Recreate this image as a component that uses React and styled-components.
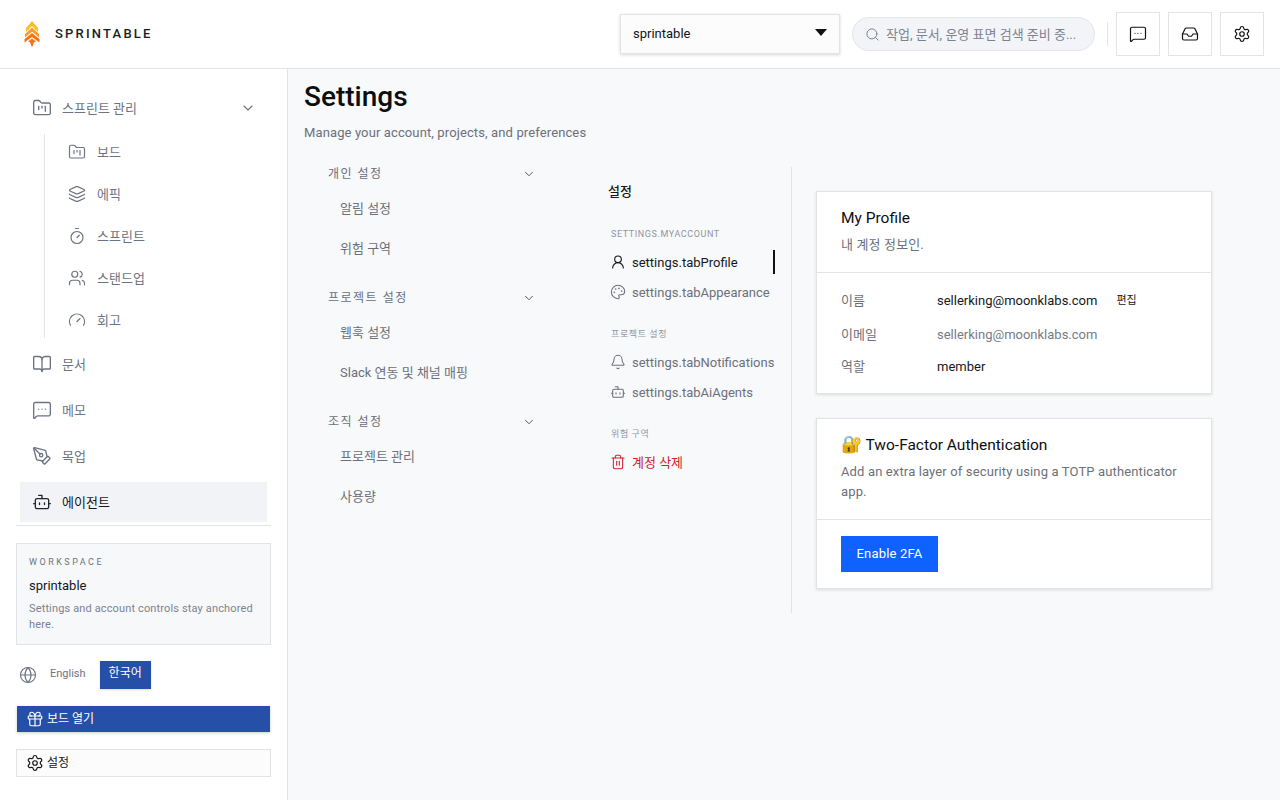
import React from "react";
import styled, { createGlobalStyle } from "styled-components";
import {
  Bell,
  BookOpen,
  Bot,
  ChevronDown,
  FolderKanban,
  Gauge,
  Gift,
  Globe,
  Inbox,
  Layers,
  MessageSquareMore,
  Palette,
  PenTool,
  Search,
  Settings,
  Timer,
  Trash2,
  UserRound,
  Users,
} from "lucide-react";

const GlobalStyle = createGlobalStyle`
  html, body {
    margin: 0;
    height: 100%;
    background: #f8f9fb;
  }

  body {
    font-family: Roboto, "Noto Sans CJK KR", sans-serif;
    color: #111318;
  }

  * {
    box-sizing: border-box;
  }
`;

const Page = styled.div`
  width: 1280px;
  height: 800px;
  display: flex;
  flex-direction: column;
  overflow: hidden;
`;

const Header = styled.header`
  height: 69px;
  flex: none;
  display: flex;
  align-items: center;
  padding: 0 16px 0 24px;
  background: #fff;
  border-bottom: 1px solid #e2e3e6;
`;

const Brand = styled.div`
  display: flex;
  align-items: center;
  gap: 15px;
  margin-right: auto;
`;

const BrandName = styled.span`
  margin-top: -2px;
  font-size: 13px;
  font-weight: 500;
  letter-spacing: 2.2px;
  color: #1b1d22;
`;

const SelectBox = styled.div`
  width: 220px;
  height: 40px;
  display: flex;
  align-items: center;
  justify-content: space-between;
  padding: 0 12px 2px;
  margin-right: 12px;
  font-size: 13px;
  background: #fcfcfc;
  border: 1px solid #e2e3e6;
  box-shadow: 0 1px 3px rgba(0, 0, 0, 0.16);
`;

const Caret = styled.span`
  width: 0;
  height: 0;
  border-left: 6.5px solid transparent;
  border-right: 6.5px solid transparent;
  border-top: 7px solid #111;
  margin-top: -1px;
`;

const SearchBox = styled.div`
  width: 243px;
  height: 34px;
  display: flex;
  align-items: center;
  gap: 6px;
  padding: 0 12px;
  font-size: 13px;
  color: #7d8290;
  background: #f3f4f8;
  border: 1px solid #e3e5eb;
  border-radius: 17px;

  & svg {
    flex: none;
  }

  & span {
    margin-top: -2px;
    white-space: nowrap;
    overflow: hidden;
    text-overflow: ellipsis;
  }
`;

const HeaderDivider = styled.div`
  width: 1px;
  height: 24px;
  margin: 0 8px 0 12px;
  background: #e2e3e6;
`;

const IconButton = styled.div`
  width: 44px;
  height: 44px;
  display: flex;
  align-items: center;
  justify-content: center;
  background: #fff;
  border: 1px solid #e2e3e6;

  & + & {
    margin-left: 8px;
  }
`;

const Body = styled.div`
  flex: 1;
  display: flex;
  min-height: 0;
`;

const Sidebar = styled.aside`
  width: 288px;
  flex: none;
  display: flex;
  flex-direction: column;
  padding: 19px 16px 0;
  background: #fff;
  border-right: 1px solid #e2e3e6;
`;

const Nav = styled.nav`
  display: flex;
  flex-direction: column;
  gap: 6px;
  padding: 0 4px 3px;
  border-bottom: 1px solid #e2e3e6;
  margin-bottom: 17px;
`;

const NavRow = styled.div`
  height: 40px;
  display: flex;
  align-items: center;
  gap: 10px;
  padding: 0 11px 0 12px;
  font-size: 13px;
  line-height: 1;
  color: ${(p) => (p.$active ? "#15171c" : "#6d7383")};
  background: ${(p) => (p.$active ? "#f2f3f7" : "transparent")};

  & svg {
    flex: none;
    color: ${(p) => (p.$active ? "#22252c" : "#6d7383")};
  }

  & svg:last-child:not(:first-child) {
    margin-left: auto;
  }
`;

const SubNav = styled.div`
  display: flex;
  flex-direction: column;
  gap: 6px;
  margin-left: 24px;
  padding-left: 16px;
  border-left: 1px solid #e2e3e6;
`;

const SubRow = styled.div`
  height: 36px;
  display: flex;
  align-items: center;
  gap: 11px;
  padding-left: 7px;
  font-size: 13px;
  line-height: 1;
  color: #6d7383;
`;

const WorkspaceCard = styled.div`
  height: 102px;
  padding: 11px 12px;
  margin-bottom: 16px;
  background: #f7f8fa;
  border: 1px solid #e2e3e6;
`;

const WorkspaceLabel = styled.div`
  font-size: 9px;
  line-height: 14px;
  letter-spacing: 2.5px;
  color: #6d7383;
`;

const WorkspaceName = styled.div`
  margin-top: 7px;
  font-size: 13px;
  line-height: 20px;
  color: #15171c;
`;

const WorkspaceText = styled.div`
  margin-top: 5px;
  font-size: 11px;
  line-height: 16px;
  letter-spacing: 0.14px;
  color: #7d8290;
`;

const LangRow = styled.div`
  height: 28px;
  display: flex;
  align-items: center;
  padding-left: 3px;
  margin-bottom: 17px;
  color: #6d7383;
`;

const LangOption = styled.div`
  height: 28px;
  display: flex;
  align-items: center;
  margin-left: ${(p) => (p.$active ? "14px" : "13px")};
  padding: 0 ${(p) => (p.$active ? "9px" : "0")} 4px;
  font-size: ${(p) => (p.$active ? "12px" : "11px")};
  line-height: 1;
  color: ${(p) => (p.$active ? "#fff" : "#6d7383")};
  background: ${(p) => (p.$active ? "#264fa8" : "transparent")};
  box-shadow: ${(p) => (p.$active ? "0 1px 2px rgba(0,0,0,0.15)" : "none")};
`;

const WideButton = styled.div`
  height: ${(p) => (p.$primary ? "26px" : "28px")};
  display: flex;
  align-items: center;
  gap: 3px;
  margin: ${(p) => (p.$primary ? "0 1px 17px" : "0")};
  padding-left: 9px;
  font-size: 12px;
  line-height: 1;
  color: ${(p) => (p.$primary ? "#fff" : "#15171c")};
  background: ${(p) => (p.$primary ? "#264fa8" : "#fcfcfc")};
  border: ${(p) => (p.$primary ? "none" : "1px solid #e2e3e6")};
  box-shadow: ${(p) => (p.$primary ? "0 1px 3px rgba(0,0,0,0.2)" : "none")};
`;

const Main = styled.main`
  flex: 1;
  padding: 9px 16px 0;
  background: #f8f9fb;
`;

const Title = styled.h1`
  margin: 0;
  font-size: 28px;
  line-height: 38px;
  font-weight: 500;
  color: #0c0d10;
`;

const Subtitle = styled.p`
  margin: 7px 0 0;
  font-size: 13px;
  line-height: 20px;
  letter-spacing: 0.12px;
  color: #6c707a;
`;

const Columns = styled.div`
  display: flex;
  margin-top: 24px;
`;

const GroupColumn = styled.div`
  width: 288px;
  flex: none;
  padding: 0 56px 0 24px;
`;

const Group = styled.div`
  margin-bottom: 23px;
`;

const GroupHead = styled.div`
  height: 14px;
  display: flex;
  align-items: center;
  justify-content: space-between;
  margin-bottom: 7px;
  font-size: 12px;
  line-height: 1;
  letter-spacing: 1.5px;
  color: #6c707a;

  & svg {
    color: #4a4e58;
  }
`;

const GroupItem = styled.div`
  height: 40px;
  display: flex;
  align-items: center;
  padding-left: 12px;
  font-size: 13px;
  line-height: 1;
  color: #6c707a;
`;

const TabColumn = styled.div`
  width: 200px;
  height: 446px;
  flex: none;
  padding: 16px 16px 0;
  border-right: 1px solid #e2e3e6;
`;

const TabTitle = styled.div`
  font-size: 13px;
  line-height: 18px;
  font-weight: 500;
  color: #15171c;
  margin-bottom: 26px;
`;

const TabLabel = styled.div`
  margin: ${(p) => (p.$first ? "0" : "20px")} 0 6px 3px;
  font-size: 9px;
  line-height: 14px;
  letter-spacing: 0.6px;
  color: #91959f;
`;

const Tab = styled.div`
  position: relative;
  height: 30px;
  display: flex;
  align-items: center;
  gap: 6px;
  margin: 0 -16px 0 2px;
  font-size: 13px;
  line-height: 1;
  white-space: nowrap;
  color: ${(p) => (p.$danger ? "#d4202c" : p.$active ? "#15171c" : "#6c707a")};

  & svg {
    flex: none;
  }
`;

const ActiveMark = styled.span`
  position: absolute;
  right: 16px;
  top: 3px;
  width: 2px;
  height: 24px;
  background: #111;
`;

const CardColumn = styled.div`
  width: 396px;
  margin: 24px 0 0 24px;
  display: flex;
  flex-direction: column;
  gap: 24px;
`;

const Card = styled.section`
  background: #fff;
  border: 1px solid #e2e3e6;
  box-shadow: 0 1px 3px rgba(0, 0, 0, 0.12);
`;

const CardHead = styled.div`
  padding: 14px 24px 17px;
  border-bottom: 1px solid #e2e3e6;
`;

const CardTitle = styled.h2`
  height: 24px;
  margin: 0;
  font-size: 15.5px;
  line-height: 24px;
  font-weight: 400;
  color: #0c0d10;
`;

const Emoji = styled.span`
  font-size: 17px;
  line-height: 1;
`;

const CardText = styled.p`
  margin: 5px 0 0;
  font-size: 13px;
  line-height: 20px;
  letter-spacing: 0.14px;
  color: #6c707a;
`;

const InfoList = styled.div`
  padding: 10px 24px 12px;
`;

const InfoRow = styled.div`
  height: ${(p) => p.$h || "34px"};
  display: flex;
  align-items: center;
  font-size: 13px;
  line-height: 1;
`;

const InfoKey = styled.span`
  width: 96px;
  color: #6c707a;
`;

const InfoValue = styled.span`
  color: ${(p) => (p.$muted ? "#777b85" : "#15171c")};
`;

const EditLink = styled.span`
  margin-left: 19px;
  font-size: 11px;
  color: #15171c;
`;

const CardFoot = styled.div`
  padding: 16px 24px;
`;

const PrimaryButton = styled.button`
  width: 97px;
  height: 36px;
  padding: 0 0 2px;
  border: none;
  font: inherit;
  font-size: 13px;
  letter-spacing: 0.2px;
  color: #fff;
  background: #0f62fe;
`;

const Logo = () => (
  <svg width="16" height="27" viewBox="0 0 16 27">
    <path d="M8 0l6 7v4L8 5 2 11V7z" fill="#fbbf24" />
    <path d="M8 6.5l7 6.5v3.5L8 10.5 1 16.5V13z" fill="#fb9a24" />
    <path d="M8 12l7.5 6v3.5L8 16 .5 21.5V18z" fill="#f97316" />
    <path d="M8 17.5l4 3-2 .8L8 26.5l-2-5.2-2-.8z" fill="#f97316" />
  </svg>
);

const sprintItems = [
  { icon: FolderKanban, label: "보드" },
  { icon: Layers, label: "에픽" },
  { icon: Timer, label: "스프린트" },
  { icon: Users, label: "스탠드업" },
  { icon: Gauge, label: "회고" },
];

const navItems = [
  { icon: BookOpen, label: "문서" },
  { icon: MessageSquareMore, label: "메모" },
  { icon: PenTool, label: "목업" },
  { icon: Bot, label: "에이전트", active: true },
];

const groups = [
  { title: "개인 설정", items: ["알림 설정", "위험 구역"] },
  { title: "프로젝트 설정", items: ["웹훅 설정", "Slack 연동 및 채널 매핑"] },
  { title: "조직 설정", items: ["프로젝트 관리", "사용량"] },
];

const App = () => (
  <Page>
    <GlobalStyle />
    <Header>
      <Brand>
        <Logo />
        <BrandName>SPRINTABLE</BrandName>
      </Brand>
      <SelectBox>
        sprintable
        <Caret />
      </SelectBox>
      <SearchBox>
        <Search size={15} strokeWidth={1.6} />
        <span>작업, 문서, 운영 표면 검색 준비 중...</span>
      </SearchBox>
      <HeaderDivider />
      <IconButton>
        <MessageSquareMore size={18} strokeWidth={1.6} />
      </IconButton>
      <IconButton>
        <Inbox size={18} strokeWidth={1.6} />
      </IconButton>
      <IconButton>
        <Settings size={18} strokeWidth={1.6} />
      </IconButton>
    </Header>
    <Body>
      <Sidebar>
        <Nav>
          <NavRow>
            <FolderKanban size={20} strokeWidth={1.6} />
            스프린트 관리
            <ChevronDown size={16} strokeWidth={1.6} />
          </NavRow>
          <SubNav>
            {sprintItems.map((item) => (
              <SubRow key={item.label}>
                <item.icon size={18} strokeWidth={1.6} />
                {item.label}
              </SubRow>
            ))}
          </SubNav>
          {navItems.map((item) => (
            <NavRow key={item.label} $active={item.active}>
              <item.icon size={20} strokeWidth={1.6} />
              {item.label}
            </NavRow>
          ))}
        </Nav>
        <WorkspaceCard>
          <WorkspaceLabel>WORKSPACE</WorkspaceLabel>
          <WorkspaceName>sprintable</WorkspaceName>
          <WorkspaceText>Settings and account controls stay anchored here.</WorkspaceText>
        </WorkspaceCard>
        <LangRow>
          <Globe size={18} strokeWidth={1.5} />
          <LangOption>English</LangOption>
          <LangOption $active>한국어</LangOption>
        </LangRow>
        <WideButton $primary>
          <Gift size={18} strokeWidth={1.6} />
          보드 열기
        </WideButton>
        <WideButton>
          <Settings size={18} strokeWidth={1.6} />
          설정
        </WideButton>
      </Sidebar>
      <Main>
        <Title>Settings</Title>
        <Subtitle>Manage your account, projects, and preferences</Subtitle>
        <Columns>
          <GroupColumn>
            {groups.map((group) => (
              <Group key={group.title}>
                <GroupHead>
                  {group.title}
                  <ChevronDown size={14} strokeWidth={1.6} />
                </GroupHead>
                {group.items.map((item) => (
                  <GroupItem key={item}>{item}</GroupItem>
                ))}
              </Group>
            ))}
          </GroupColumn>
          <TabColumn>
            <TabTitle>설정</TabTitle>
            <TabLabel $first>SETTINGS.MYACCOUNT</TabLabel>
            <Tab $active>
              <UserRound size={16} strokeWidth={1.7} />
              settings.tabProfile
              <ActiveMark />
            </Tab>
            <Tab>
              <Palette size={16} strokeWidth={1.6} />
              settings.tabAppearance
            </Tab>
            <TabLabel>프로젝트 설정</TabLabel>
            <Tab>
              <Bell size={16} strokeWidth={1.6} />
              settings.tabNotifications
            </Tab>
            <Tab>
              <Bot size={16} strokeWidth={1.6} />
              settings.tabAiAgents
            </Tab>
            <TabLabel>위험 구역</TabLabel>
            <Tab $danger>
              <Trash2 size={16} strokeWidth={1.6} />
              계정 삭제
            </Tab>
          </TabColumn>
          <CardColumn>
            <Card>
              <CardHead>
                <CardTitle>My Profile</CardTitle>
                <CardText>내 계정 정보인.</CardText>
              </CardHead>
              <InfoList>
                <InfoRow>
                  <InfoKey>이름</InfoKey>
                  <InfoValue>sellerking@moonklabs.com</InfoValue>
                  <EditLink>편집</EditLink>
                </InfoRow>
                <InfoRow>
                  <InfoKey>이메일</InfoKey>
                  <InfoValue $muted>sellerking@moonklabs.com</InfoValue>
                </InfoRow>
                <InfoRow $h="30px">
                  <InfoKey>역할</InfoKey>
                  <InfoValue>member</InfoValue>
                </InfoRow>
              </InfoList>
            </Card>
            <Card>
              <CardHead>
                <CardTitle>
                  <Emoji>🔐</Emoji> Two-Factor Authentication
                </CardTitle>
                <CardText>Add an extra layer of security using a TOTP authenticator app.</CardText>
              </CardHead>
              <CardFoot>
                <PrimaryButton>Enable 2FA</PrimaryButton>
              </CardFoot>
            </Card>
          </CardColumn>
        </Columns>
      </Main>
    </Body>
  </Page>
);

export default App;
